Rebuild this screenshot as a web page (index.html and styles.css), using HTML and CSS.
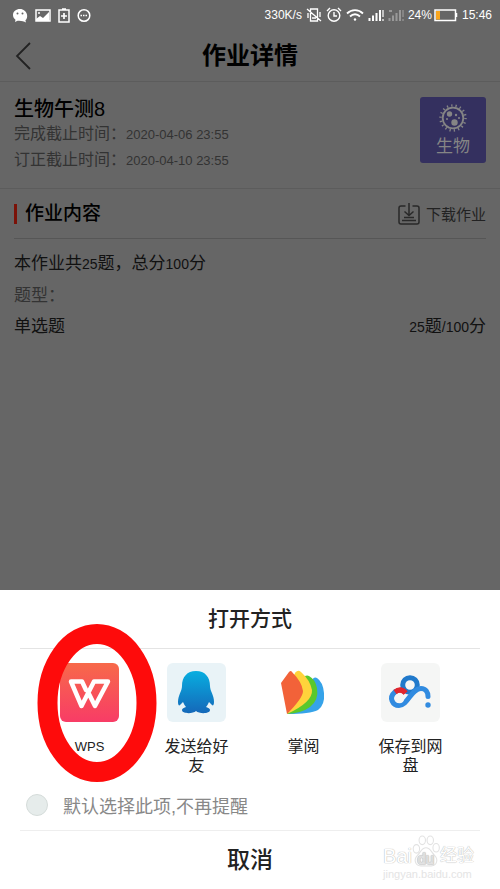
FILE: index.html
```html
<!DOCTYPE html>
<html lang="zh-CN">
<head>
  <meta charset="UTF-8">
  <meta name="viewport" content="width=device-width, initial-scale=1">
  <title>作业详情</title>
  <link rel="stylesheet" href="styles.css">
</head>
<body>

  <div class="status-bar">
    <div class="status-left">
      <svg width="16" height="15" viewBox="0 0 16 15">
        <path d="M8 1C4 1 1 3.500 1 7c0 2 1 3.700 2.500 4.700L3 14l2.500-1.200c3 .6 4.500 0 7 .9l1.500.8-.6-2.200C15 11 15.500 9 15 6.500 14.500 3.500 11.500 1 8 1z" fill="#fff"/>
        <circle cx="5.500" cy="5.500" r="1" fill="#666"/>
        <circle cx="10.500" cy="5.500" r="1" fill="#666"/>
      </svg>
      <svg width="16" height="15" viewBox="0 0 16 15">
        <path d="M1 2h14v11H1z" fill="none" stroke="#fff" stroke-width="1.500"/>
        <path d="M1 11l4-3 3 2 6-6v9H1z" fill="#fff"/>
        <circle cx="4" cy="5" r="1" fill="#fff"/>
      </svg>
      <svg width="12" height="15" viewBox="0 0 12 15">
        <path d="M1 2h10v12H1zM4 1h4" fill="none" stroke="#fff" stroke-width="1.500"/>
        <path d="M6 5v6M3 8h6" stroke="#fff" stroke-width="1.700"/>
      </svg>
      <svg width="14" height="15" viewBox="0 0 14 15">
        <circle cx="7" cy="7.500" r="5.800" fill="none" stroke="#fff" stroke-width="1.500"/>
        <path d="M3.500 7.500h7" stroke="#fff" stroke-width="1.500" stroke-dasharray="1.500 1"/>
      </svg>
    </div>
    <div class="status-right">
      <span>330K/s</span>
      <svg width="16" height="16" viewBox="0 0 16 16" fill="none" stroke="#fff" stroke-width="1.300">
        <path d="M4.500 2h7v12h-7zM1 2l14 12M2 6v5M14 5v5M6 11h4"/>
      </svg>
      <svg width="16" height="16" viewBox="0 0 16 16" fill="none" stroke="#fff" stroke-width="1.400">
        <circle cx="8" cy="8.500" r="5.800"/>
        <path d="M8 5v4h3M1 4l3-3M15 4l-3-3"/>
      </svg>
      <svg width="18" height="14" viewBox="0 0 18 14" fill="none" stroke="#fff" stroke-width="1.800">
        <path d="M1 5.500c4.500-4.500 11.500-4.500 16 0M4 8.500c3-3 7-3 10 0"/>
        <circle cx="9" cy="11.500" r="1.200" fill="#fff" stroke="none"/>
      </svg>
      <svg width="16" height="14" viewBox="0 0 16 14" fill="none" stroke="#fff" stroke-width="2">
        <path d="M1.500 13v-3M5 13V7.500M8.500 13V5M12 13V2"/>
        <path d="M15 2v7M15 11v2" stroke-width="1.200"/>
      </svg>
      <svg width="16" height="14" viewBox="0 0 16 14" fill="none" stroke="#999" stroke-width="2">
        <path d="M1.500 13v-3M5 13V7.500M8.500 13V5M12 13V2M1 3h3"/>
        <path d="M15 2v7M15 11v2" stroke-width="1.200"/>
      </svg>
      <span class="battery">24%
        <svg width="24" height="14" viewBox="0 0 24 14">
          <path d="M1 2h20.500v10.500H1zM22.500 5v4" fill="none" stroke="#fff" stroke-width="1.500"/>
          <path d="M2 3h4v8.500H2z" fill="#f9a61f"/>
        </svg>
      </span>
      <span>15:46</span>
    </div>
  </div>

  <header class="header">
    <a href="#" class="back" aria-label="返回">
      <svg width="18" height="30" viewBox="0 0 18 30">
        <path d="M16 2L3 15l13 13" fill="none" stroke="#222" stroke-width="1.800"/>
      </svg>
    </a>
    <h1>作业详情</h1>
  </header>

  <main class="page">
    <section class="info">
      <div>
        <h2>生物午测8</h2>
        <p>完成截止时间：<span class="num">2020-04-06 23:55</span></p>
        <p>订正截止时间：<span class="num">2020-04-10 23:55</span></p>
      </div>
      <div class="subject">
        <svg width="30" height="30" viewBox="0 0 30 30">
          <circle cx="15" cy="15" r="10.300" fill="none" stroke="#858585" stroke-width="1.800"/>
          <circle cx="15" cy="15" r="12.500" fill="none" stroke="#858585" stroke-width="2.500" stroke-dasharray="1.300 3.060"/>
          <circle cx="11.500" cy="11" r="2.700" fill="#858585"/>
          <circle cx="16.500" cy="19.500" r="3.200" fill="#858585"/>
          <circle cx="18" cy="12" r="1.200" fill="#858585"/>
          <circle cx="9" cy="16" r="1" fill="#858585"/>
          <circle cx="21" cy="15" r="1" fill="#858585"/>
        </svg>
        <span>生物</span>
      </div>
    </section>

    <section class="content">
      <div class="content-head">
        <h3>作业内容</h3>
        <button type="button" class="download">
          <svg width="22" height="22" viewBox="0 0 22 22" fill="none" stroke="#292929" stroke-width="1.500">
            <path d="M7.500 3H3Q1 3 1 5v14q0 2 2 2h16q2 0 2-2V5q0-2-2-2h-4.500M11 0v12M6.500 8.500L11 12.500l4.500-4M6 14.500h10M4 17.500h14"/>
          </svg>
          下载作业
        </button>
      </div>
      <p class="total">本作业共<span class="num">25</span>题，总分<span class="num">100</span>分</p>
      <p class="kind">题型：</p>
      <p class="row"><span>单选题</span><span><span class="num">25</span>题<span class="num">/100</span>分</span></p>
    </section>
  </main>

  <div class="sheet">
    <h2>打开方式</h2>
    <div class="apps">
      <button type="button" class="app">
        <svg width="59" height="59" viewBox="0 0 59 59">
          <defs>
            <linearGradient id="wps" x2="0" y2="1">
              <stop offset="0" stop-color="#f7694a"/>
              <stop offset="1" stop-color="#f83c66"/>
            </linearGradient>
          </defs>
          <rect width="59" height="59" rx="6" fill="url(#wps)"/>
          <path d="M26 27L22 18.500H11L21.500 43 34 18.500h14L35 43l-6-12" fill="none" stroke="#fff" stroke-width="4.500" stroke-linejoin="round" stroke-linecap="round"/>
        </svg>
        <span class="name latin">WPS</span>
        <svg class="ring" width="120" height="160" viewBox="0 0 120 160">
          <ellipse cx="60" cy="80" rx="49.500" ry="69" fill="none" stroke="#fe0b0b" stroke-width="20"/>
        </svg>
      </button>
      <button type="button" class="app">
        <svg width="59" height="59" viewBox="0 0 59 59">
          <defs>
            <linearGradient id="qq" x2="0" y2="1">
              <stop offset="0" stop-color="#08aee0"/>
              <stop offset="1" stop-color="#1568b9"/>
            </linearGradient>
          </defs>
          <rect width="59" height="59" rx="6" fill="#e9f3f7"/>
          <path d="M29 8c-9 0-14 6-14 15 0 5-4 9-4 16 0 3 1 4 2 3l3-3c1 2 2 4 3 5-3 1-4 2-4 3 0 4 11 4 14 1 3 3 14 3 14-1 0-1-1-2-4-3 1-1 2-3 3-5l3 3c1 1 2 0 2-3 0-7-4-11-4-16 0-9-5-15-14-15z" fill="url(#qq)"/>
        </svg>
        <span class="name">发送给好友</span>
      </button>
      <button type="button" class="app">
        <svg width="59" height="59" viewBox="0 0 59 59">
          <path d="M13 51L36 19q4-6 7-4 6 4 7 15 1 12-6 17-8 4-31 4z" fill="#36a3e9"/>
          <path d="M13 51L27 18q4-7 8-5 6 3 8 12 2 12-7 19-8 6-23 7z" fill="#5ac82c"/>
          <path d="M13 51l6-36q3-10 8-6 9 8 11 18 1 12-25 24z" fill="#ffd33b"/>
          <path d="M13 51L7 20l8-11q2-2 3 0 10 10 11 19 0 7-16 23z" fill="#f26239"/>
        </svg>
        <span class="name">掌阅</span>
      </button>
      <button type="button" class="app">
        <svg width="59" height="59" viewBox="0 0 59 59">
          <rect width="59" height="59" rx="6" fill="#f5f6f5"/>
          <g fill="none" stroke-width="5">
            <circle cx="29" cy="22" r="7.300" stroke="#2079cb"/>
            <path d="M14 29q6-5 10.500 1" stroke="#e0262e"/>
            <path d="M14 29C7 35 12 42.500 18 42.500c9 0 12-17 22-17 5 0 7 4 7 8" stroke="#318be0" stroke-linecap="round"/>
            <path d="M14 29q6-4 10.500 1" stroke="#e0262e"/>
          </g>
          <circle cx="18.500" cy="35.500" r="4.800" fill="#f5f6f5"/>
          <circle cx="47" cy="42" r="2.700" fill="#318be0"/>
        </svg>
        <span class="name">保存到网盘</span>
      </button>
    </div>
    <label class="remember">
      <input type="checkbox" name="remember">
      默认选择此项,不再提醒
    </label>
    <button type="button" class="cancel">取消</button>
    <div class="watermark">
      <div class="brand">
        <span>Bai</span>
        <svg width="28" height="32" viewBox="0 0 26 30" fill="#fff" stroke="#e2e2e2">
          <ellipse cx="4" cy="13" rx="3" ry="4"/>
          <ellipse cx="9.500" cy="5" rx="3" ry="4"/>
          <ellipse cx="17" cy="5" rx="3" ry="4"/>
          <ellipse cx="22.500" cy="12" rx="3" ry="4"/>
          <path d="M13 12c-4 0-5 4-8 7-4 4-2 10 3 10h10c5 0 7-6 3-10-3-3-4-7-8-7z"/>
          <text x="5" y="27" font-size="14">du</text>
        </svg>
        <span class="cn">经验</span>
      </div>
      <div class="site">jingyan.baidu.com</div>
    </div>
  </div>

</body>
</html>
```

FILE: styles.css
```css
* {
  box-sizing: border-box;
}

body {
  margin: 0;
  min-height: 100vh;
  display: flex;
  flex-direction: column;
  background-color: #666;
  color: #111;
  font-family: "Liberation Sans", "Noto Sans CJK SC", sans-serif;
  font-size: 17px;
}

h1, h2, h3, p {
  margin: 0;
}

button {
  padding: 0;
  border: none;
  background: none;
  color: inherit;
  font: inherit;
  cursor: pointer;
}

svg {
  display: block;
  flex-shrink: 0;
}

/* Digits are set smaller than the Chinese text */
.num {
  font-size: 14px;
}

/* Status bar */
.status-bar {
  display: flex;
  justify-content: space-between;
  align-items: center;
  height: 30px;
  padding: 0 8px 0 12px;
  color: #fff;
  font-size: 12px;
}

.status-left,
.status-right {
  display: flex;
  align-items: center;
}

.status-left {
  gap: 7px;
}

.status-right {
  gap: 4px;
}

.battery {
  display: flex;
  align-items: center;
  gap: 2px;
}

/* Header */
.header {
  display: grid;
  grid-template-columns: 60px 1fr 60px;
  align-items: center;
  height: 52px;
  padding: 0 14px;
  border-bottom: 1px solid #5c5c5c;
}

.header h1 {
  color: #000;
  font-size: 24px;
  line-height: 32px;
  text-align: center;
}

.page {
  flex: 1;
}

/* Homework info */
.info {
  display: flex;
  justify-content: space-between;
  align-items: flex-start;
  height: 107px;
  padding: 15px 14px 0;
  border-bottom: 1px solid #5c5c5c;
}

.info h2 {
  color: #000;
  font-size: 20px;
  font-weight: 500;
  line-height: 24px;
}

.info p {
  color: #333;
  font-size: 16px;
  line-height: 25px;
}

.info .num {
  font-size: 13px;
}

.subject {
  display: flex;
  flex-direction: column;
  align-items: center;
  width: 66px;
  height: 66px;
  padding-top: 6px;
  border-radius: 3px;
  background-color: #34305f;
  color: #858585;
  font-size: 17px;
  line-height: 28px;
}

/* Homework content */
.content {
  padding: 0 14px;
}

.content-head {
  display: flex;
  justify-content: space-between;
  align-items: center;
  height: 50px;
  margin-bottom: 9px;
  border-bottom: 1px solid #565656;
}

.content-head h3 {
  padding-left: 8px;
  border-left: 3px solid #7b1208;
  color: #000;
  font-size: 19px;
  font-weight: 500;
  line-height: 20px;
}

.download {
  display: flex;
  align-items: center;
  gap: 6px;
  color: #222;
  font-size: 15px;
}

.total,
.kind,
.row {
  line-height: 31px;
}

.kind {
  color: #333;
}

.row {
  display: flex;
  justify-content: space-between;
}

/* Open-with sheet */
.sheet {
  position: relative;
  padding: 0 20px;
  background-color: #fff;
  color: #222;
}

.sheet h2 {
  border-bottom: 1px solid #e4e4e4;
  font-size: 21px;
  font-weight: 500;
  line-height: 58px;
  text-align: center;
}

.apps {
  display: grid;
  grid-template-columns: repeat(4, 1fr);
  padding: 14px 16px 0;
}

.app {
  position: relative;
  display: flex;
  flex-direction: column;
  align-items: center;
  gap: 15px;
  font-size: 16px;
  line-height: 19px;
}

.name {
  width: 66px;
}

.latin {
  font-size: 13px;
}

/* Red circle round the app to pick */
.ring {
  position: absolute;
  top: -40px;
  left: 50%;
  margin-left: -53px;
  pointer-events: none;
}

.remember {
  display: flex;
  align-items: center;
  gap: 15px;
  height: 50px;
  margin-top: 5px;
  padding-left: 6px;
  color: #888;
  font-size: 18px;
}

.remember input {
  appearance: none;
  width: 22px;
  height: 22px;
  margin: 0;
  border: 1px solid #d5dcda;
  border-radius: 50%;
  background-color: #e6eceb;
}

.cancel {
  display: block;
  width: 100%;
  border-top: 1px solid #eee;
  font-size: 23px;
  font-weight: 500;
  line-height: 58px;
}

/* Watermark over the corner of the sheet */
.watermark {
  position: absolute;
  right: 26px;
  bottom: 8px;
  color: #fff;
  pointer-events: none;
}

.brand {
  display: flex;
  align-items: flex-end;
  font-size: 20px;
  line-height: 22px;
  text-shadow: 0 0 1px #bbb, 0 0 1px #bbb;
}

.brand .cn {
  font-size: 17px;
}

.site {
  color: #e4e4e4;
  font-size: 11px;
  line-height: 14px;
}
```
